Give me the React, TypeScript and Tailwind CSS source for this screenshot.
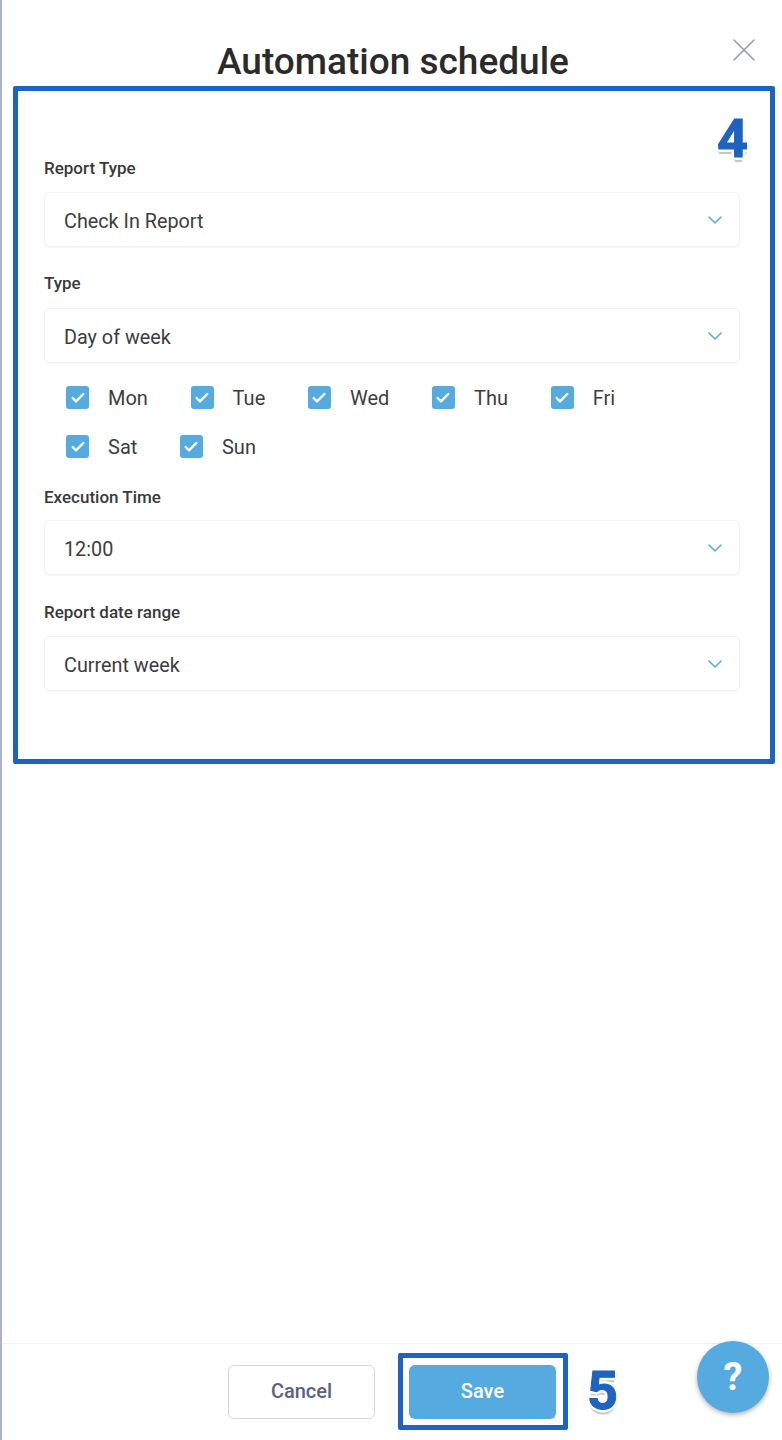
import { Check, ChevronDown, X } from 'lucide-react';

const days = ['Mon', 'Tue', 'Wed', 'Thu', 'Fri', 'Sat', 'Sun'];

const calloutClass =
  "absolute font-bold text-[54px] leading-none text-[#1f63c1] [-webkit-text-stroke:1px_#1f63c1] [text-shadow:3px_0_0_#fff,-3px_0_0_#fff,0_-3px_0_#fff,0_3px_0_#fff,2px_2px_0_#fff,-2px_2px_0_#fff,2px_-2px_0_#fff,-2px_-2px_0_#fff,0_5px_1px_#c4c4c4]";

function SelectField({ value }: { value: string }) {
  return (
    <div className="flex h-[55px] items-center justify-between rounded-md border border-[#eef0f5] bg-white pl-[19px] pr-[12px] shadow-[0_1px_1px_rgba(30,40,80,0.04)]">
      <span className="pt-[5px] text-[19.8px] text-[#3d3d3d]">{value}</span>
      <ChevronDown className="h-[24px] w-[24px] text-[#55abe0]" strokeWidth={1.5} />
    </div>
  );
}

function Field({ label, value, className, labelClassName }: { label: string; value: string; className?: string; labelClassName: string }) {
  return (
    <div className={className}>
      <div className={`h-[19px] text-[17px] leading-[19px] font-medium text-[#3a3a3a] ${labelClassName}`}>{label}</div>
      <SelectField value={value} />
    </div>
  );
}

export default function App() {
  return (
    <div className="relative flex h-[1440px] w-[782px] flex-col border-l-2 border-[#a9b4cc] bg-white font-['Roboto',sans-serif]">
      {/* Header */}
      <div className="relative h-[86px] shrink-0">
        <h1 className="absolute left-[215px] top-[40px] text-[37px] leading-[44px] font-medium whitespace-nowrap text-[#2b2b2b]">
          Automation schedule
        </h1>
        <button className="absolute left-[722px] top-[30px] text-[#8f98ac]">
          <X className="h-[40px] w-[40px]" strokeWidth={0.9} />
        </button>
      </div>

      {/* Form */}
      <div className="relative mx-[11px] h-[678px] w-[762px] shrink-0 rounded-[2px] border-[5px] border-[#1f63c1] pl-[26px] pr-[30px] pt-[68px]">
        <span className={`${calloutClass} right-[22px] top-[21px]`}>4</span>
        <Field label="Report Type" value="Check In Report" labelClassName="mb-[14px]" />
        <Field label="Type" value="Day of week" className="mt-[27px]" labelClassName="mb-[15px]" />
        <div className="mt-[23px] flex flex-wrap gap-x-[42.7px] gap-y-[26px] pl-[22px] pr-[40px]">
          {days.map((day) => (
            <label key={day} className="flex h-[23px] items-center gap-[19px] text-[20px] text-[#3d3d3d]">
              <span className="flex h-[23px] w-[23px] items-center justify-center rounded-[3px] bg-[#55abe0]">
                <Check className="h-[16px] w-[16px] text-white" strokeWidth={3.5} />
              </span>
              {day}
            </label>
          ))}
        </div>
        <Field label="Execution Time" value="12:00" className="mt-[30px]" labelClassName="mb-[13px]" />
        <Field label="Report date range" value="Current week" className="mt-[28px]" labelClassName="mb-[14px]" />
      </div>

      <div className="flex-1" />

      {/* Footer */}
      <div className="relative flex h-[97px] shrink-0 items-start justify-center gap-[34px] border-t border-[#eef0f5] pt-[21px]">
        <button className="h-[54px] w-[147px] rounded-md border border-[#d3d7e3] bg-white pb-[3px] text-[20px] font-medium text-[#59627e]">
          Cancel
        </button>
        <div className="relative">
          <button className="h-[54px] w-[147px] rounded-md bg-[#55abe0] pb-[3px] text-[20px] font-medium text-white">Save</button>
          <div className="absolute -left-[11px] -right-[12px] -top-[12px] -bottom-[11px] rounded-[2px] border-[5px] border-[#1f63c1]" />
          <span className={`${calloutClass} left-[178px] top-[-1px]`}>5</span>
        </div>
        <button className="absolute left-[695px] top-[-3px] flex h-[72px] w-[72px] items-center justify-center rounded-full bg-[#55abe0] text-[38px] font-bold text-white shadow-[0_2px_5px_rgba(0,0,0,0.3)]">
          ?
        </button>
      </div>
    </div>
  );
}
